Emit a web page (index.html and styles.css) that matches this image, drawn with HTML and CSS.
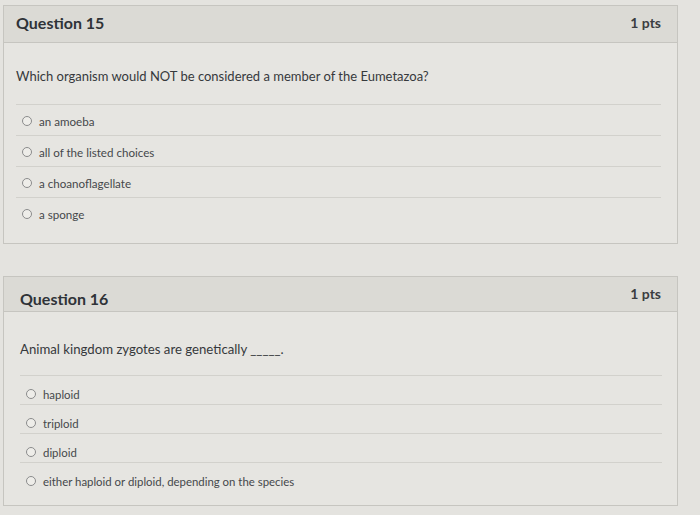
FILE: index.html
```html
<!DOCTYPE html>
<html lang="en">
<head>
<meta charset="utf-8">
<title>Quiz</title>
<link rel="stylesheet" href="styles.css">
</head>
<body>
<div class="page">
  <section class="card">
    <header class="card-head">
      <h2 class="q-title">Question 15</h2>
      <span class="q-pts">1 pts</span>
    </header>
    <div class="card-body">
      <p class="q-text">Which organism would NOT be considered a member of the Eumetazoa?</p>
      <ul class="answers">
        <li class="answer"><span class="radio"></span><span class="answer-label">an amoeba</span></li>
        <li class="answer"><span class="radio"></span><span class="answer-label">all of the listed choices</span></li>
        <li class="answer"><span class="radio"></span><span class="answer-label">a choanoflagellate</span></li>
        <li class="answer"><span class="radio"></span><span class="answer-label">a sponge</span></li>
      </ul>
    </div>
  </section>

  <section class="card card-second">
    <header class="card-head">
      <h2 class="q-title">Question 16</h2>
      <span class="q-pts">1 pts</span>
    </header>
    <div class="card-body">
      <p class="q-text">Animal kingdom zygotes are genetically _____.</p>
      <ul class="answers">
        <li class="answer"><span class="radio"></span><span class="answer-label">haploid</span></li>
        <li class="answer"><span class="radio"></span><span class="answer-label">triploid</span></li>
        <li class="answer"><span class="radio"></span><span class="answer-label">diploid</span></li>
        <li class="answer"><span class="radio"></span><span class="answer-label">either haploid or diploid, depending on the species</span></li>
      </ul>
    </div>
  </section>
</div>
</body>
</html>
```

FILE: styles.css
```css
* { box-sizing: border-box; }

html, body {
  margin: 0;
  padding: 0;
  background: #e4e3df;
  font-family: Lato, "Open Sans", "Liberation Sans", sans-serif;
}

.page {
  display: flex;
  flex-direction: column;
  gap: 32px;
  padding: 5px 22px 0 3px;
}

.card {
  width: 675px;
  background: #e6e5e1;
  border: 1px solid #c6c5c0;
}

.card-head {
  height: 37px;
  display: flex;
  align-items: center;
  justify-content: space-between;
  padding: 0 16px 4px 12px;
  background: #dbdad5;
  border-bottom: 1px solid #c6c5c0;
}

.q-title {
  margin: 0;
  font-size: 16px;
  font-weight: 700;
  color: #2f3338;
}

.q-pts {
  font-size: 14px;
  font-weight: 700;
  color: #3a3d40;
}

.card-body {
  padding: 24px 16px 15px 12px;
}

.q-text {
  margin: 0 0 19px;
  font-size: 13px;
  line-height: 18px;
  color: #36393c;
}

.answers {
  list-style: none;
  margin: 0;
  padding: 0;
}

.answer {
  height: 31px;
  display: flex;
  align-items: center;
  padding: 2px 0 0 6px;
  border-top: 1px solid #d2d1cc;
  font-size: 11.6px;
  color: #45484b;
}

.radio {
  width: 10px;
  height: 10px;
  border-radius: 50%;
  border: 1px solid #8b8c8c;
  background: #eeede9;
  margin-right: 7px;
  flex: none;
}

.card-second .card-head {
  padding: 0 16px 0 16px;
  height: 35px;
}

.card-second .q-title { padding-top: 8px; }
.card-second .q-pts { padding-bottom: 2px; }

.card-second .card-body {
  padding: 28px 15px 14px 16px;
}

.card-second .q-text {
  margin-bottom: 17px;
  font-size: 13.2px;
}

.card-second .answer {
  height: 29px;
  padding-top: 8px;
  font-size: 11.4px;
}
```
